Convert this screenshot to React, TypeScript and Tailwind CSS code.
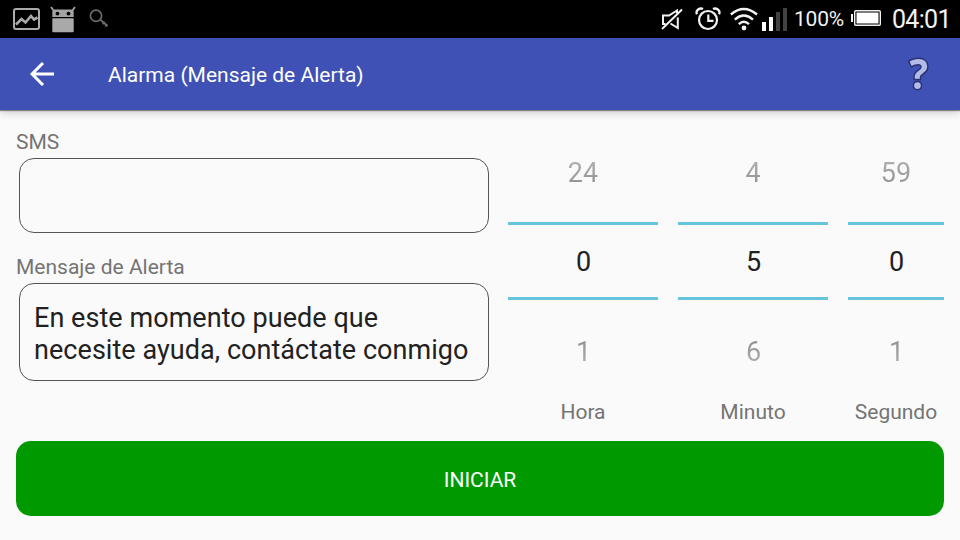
type PickerProps = {
  previous: string;
  current: string;
  next: string;
  label: string;
  width: string;
};

function Picker({ previous, current, next, label, width }: PickerProps) {
  return (
    <div className={`flex flex-col items-center ${width}`}>
      <div className="flex h-[98px] w-full items-center justify-center text-[27px] leading-8">
        <span className="bg-linear-to-b from-[#b4b4b4] to-[#8c8c8c] bg-clip-text text-transparent">{previous}</span>
      </div>
      <div className="flex h-[78px] w-full items-center justify-center border-y-[3px] border-[#66c5db] pt-px pl-px text-[27px] leading-8 text-[#212121]">
        {current}
      </div>
      <div className="flex h-[100px] w-full items-center justify-center pt-1 pl-px text-[27px] leading-8">
        <span className="bg-linear-to-b from-[#8c8c8c] to-[#b4b4b4] bg-clip-text text-transparent">{next}</span>
      </div>
      <span className="text-[21px] leading-6 text-[#747474]">{label}</span>
    </div>
  );
}

function PictureIcon() {
  return (
    <svg className="h-[22px] w-[27px]" viewBox="0 0 27 22" fill="none" stroke="#aaaaaa" strokeWidth="2">
      <rect x="1" y="1" width="25" height="20" rx="2" />
      <path d="M3 16.500l5.500-5.500 4 3.500 5.500-6.500 3 3.500 3.500-2" strokeWidth="2.6" />
    </svg>
  );
}

function RobotIcon() {
  return (
    <svg className="h-[27px] w-[26px]" viewBox="0 0 26 27">
      <path d="M1 1l3 4M25 1l-3 4" stroke="#a3a3a3" strokeWidth="1.8" />
      <path d="M2.300 11V6q0-2.500 2.500-2.500h16.400q2.500 0 2.500 2.500v5z" fill="#a3a3a3" />
      <circle cx="7.500" cy="7.600" r="1.900" fill="#000" />
      <circle cx="18.500" cy="7.600" r="1.900" fill="#000" />
      <rect x="2.300" y="12.300" width="21.400" height="14" rx="1" fill="#a9a9a9" />
    </svg>
  );
}

function KeyIcon() {
  return (
    <svg className="h-5 w-5" viewBox="0 0 20 20" fill="none" stroke="#6c6c6c" strokeWidth="1.7">
      <circle cx="7" cy="6.800" r="5.600" />
      <path d="M11 10.500l7.500 6.500M13.700 15.200l2-2.400M16.200 17.500l2-2.400" />
    </svg>
  );
}

function MutedIcon() {
  return (
    <svg className="h-6 w-[23px]" viewBox="0 0 23 24" fill="none" stroke="#f2f2f2" strokeWidth="2">
      <path d="M5.500 17H3V8.500h6L17 3.500v3M17.800 10.500v10.500l-7.300-4.500" />
      <path d="M2 22L22 2.500" />
    </svg>
  );
}

function AlarmIcon() {
  return (
    <svg className="h-6 w-[26px]" viewBox="0 0 26 24" fill="none" stroke="#f2f2f2" strokeWidth="2.2">
      <circle cx="13" cy="13" r="9" />
      <path d="M13.300 7.500v6.300h5.200" />
      <path d="M2 7.200C0 3.200 5 .4 8 2M24 7.200C26 3.200 21 .4 18 2" strokeWidth="2.300" />
    </svg>
  );
}

function WifiIcon() {
  return (
    <svg className="h-6 w-7" viewBox="0 0 28 24" fill="none" stroke="#f2f2f2" strokeWidth="2.400">
      <path d="M.8 7.500Q13.800-3.500 27 7.500" />
      <path d="M4.800 12.600Q13.800 4.500 23 12.600" />
      <path d="M8.800 17.100Q13.800 12.600 19 17.100" />
      <circle cx="14" cy="21" r="2.400" fill="#f2f2f2" stroke="none" />
    </svg>
  );
}

function SignalIcon() {
  return (
    <svg className="h-6 w-[25px]" viewBox="0 0 25 24">
      <rect x="0" y="15" width="4" height="9" fill="#fff" />
      <rect x="7" y="10" width="4" height="14" fill="#fff" />
      <rect x="14" y="5" width="4" height="19" fill="#424242" />
      <rect x="21" y="1" width="4" height="23" fill="#424242" />
    </svg>
  );
}

function BatteryIcon() {
  return (
    <svg className="h-4 w-[30px]" viewBox="0 0 30 16">
      <rect x="0" y="4" width="2" height="8" fill="#f2f2f2" />
      <rect x="3.700" y=".7" width="25.600" height="14.600" rx="1" fill="none" stroke="#f2f2f2" strokeWidth="1.400" />
      <rect x="5.500" y="2.500" width="22" height="11" fill="#fff" />
    </svg>
  );
}

function StatusBar() {
  return (
    <div className="flex h-[38px] shrink-0 items-center justify-between bg-black pr-[10px] pl-[13px] text-[#f2f2f2]">
      <div className="flex items-center">
        <PictureIcon />
        <div className="ml-[10px]">
          <RobotIcon />
        </div>
        <div className="ml-[13px]">
          <KeyIcon />
        </div>
      </div>
      <div className="flex items-center">
        <MutedIcon />
        <div className="ml-3">
          <AlarmIcon />
        </div>
        <div className="ml-[9px]">
          <WifiIcon />
        </div>
        <div className="ml-1">
          <SignalIcon />
        </div>
        <span className="ml-[7px] w-[51px] pb-px text-[21px] leading-6 tracking-[-0.2px] whitespace-nowrap">100%</span>
        <div className="mb-[2px] ml-[6px]">
          <BatteryIcon />
        </div>
        <span className="ml-[11px] w-[58px] pt-[2px] text-[25px] leading-7 tracking-[-0.7px] whitespace-nowrap">04:01</span>
      </div>
    </div>
  );
}

function AppBar() {
  return (
    <header className="z-10 flex h-[72px] shrink-0 items-center bg-[#3f51b5] pr-[31px] pl-[30px] text-white shadow-[0_1px_1px_rgba(0,0,0,0.4),0_3px_8px_rgba(0,0,0,0.18)]">
      <svg className="h-6 w-6" viewBox="0 0 24 24" fill="none" stroke="#fff" strokeWidth="3">
        <path d="M24 12H2M13 1L2 12l11 11" />
      </svg>
      <h1 className="ml-[54px] pt-[2px] text-[21px] leading-6">Alarma (Mensaje de Alerta)</h1>
      <span className="ml-auto origin-center scale-x-95 pb-[2px] font-['Open_Sans',sans-serif] text-[41px] leading-[70px] font-bold text-[#b3bce8] [paint-order:stroke_fill] [-webkit-text-stroke:3px_#29326f]">
        ?
      </span>
    </header>
  );
}

export default function App() {
  return (
    <div className="flex h-[540px] w-[960px] flex-col overflow-hidden bg-[#fafafa] font-[Roboto,sans-serif]">
      <StatusBar />
      <AppBar />
      <main className="flex flex-1 flex-col px-4">
        <div className="flex h-[331px]">
          <section className="w-[492px] pt-5">
            <p className="text-[21px] leading-6 text-[#747474]">SMS</p>
            <div className="mt-1 ml-[3px] h-[75px] w-[470px] rounded-[15px] border border-[#555]" />
            <p className="mt-[22px] text-[21px] leading-6 text-[#747474]">Mensaje de Alerta</p>
            <div className="mt-1 ml-[3px] h-[98px] w-[470px] rounded-[15px] border border-[#555] pt-[18px] pl-[14px] text-[27px] leading-8 tracking-[0.05px] whitespace-nowrap text-[#212121]">
              En este momento puede que
              <br />
              necesite ayuda, contáctate conmigo
            </div>
          </section>
          <section className="flex gap-5 pt-[14px]">
            <Picker previous="24" current="0" next="1" label="Hora" width="w-[150px]" />
            <Picker previous="4" current="5" next="6" label="Minuto" width="w-[150px]" />
            <Picker previous="59" current="0" next="1" label="Segundo" width="w-24" />
          </section>
        </div>
        <button className="h-[75px] w-full rounded-[15px] bg-[#009900] pt-[2px] text-[21px] leading-6 text-white">INICIAR</button>
      </main>
    </div>
  );
}
